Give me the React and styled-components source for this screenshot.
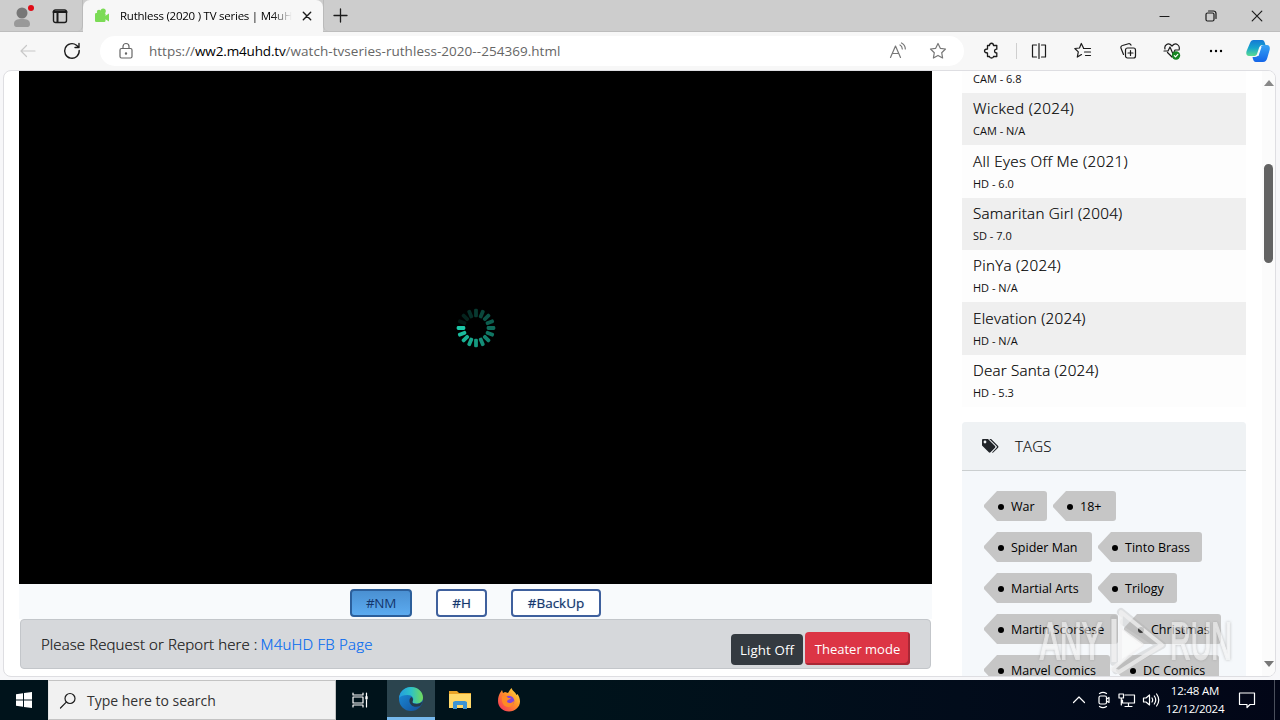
import React from 'react'
import styled, { createGlobalStyle } from 'styled-components'

const GlobalStyle = createGlobalStyle`
* { box-sizing: border-box; }
body {
    margin: 0;
    overflow: hidden;
    background: #f7f7f7;
    font-family: 'Open Sans', 'Noto Sans', sans-serif;
    color: #111;
}
svg { display: block; flex: none; }
`

const Screen = styled.div`
width: 1280px;
height: 720px;
display: flex;
flex-direction: column;
overflow: hidden;
`

// single line of text, spacing keeps it as wide as the system font
const Label = styled.span`
font-size: ${p => p.$size || 15}px;
font-weight: ${p => p.$weight || 400};
letter-spacing: ${p => p.$track || 0}px;
line-height: ${p => p.$line || 20}px;
color: ${p => p.$color || 'inherit'};
-webkit-text-stroke: ${p => p.$weight ? '0.2px currentColor' : '0'};
white-space: nowrap;
`

/* browser */
const TabStrip = styled.div`
height: 32px;
flex: none;
background: #cdcdcd;
border-bottom: 1px solid #bdbdbd;
display: flex;
`
const TabTools = styled.div`
width: 83px;
display: flex;
align-items: center;
gap: 15px;
padding-left: 11px;
border-right: 1px solid #bababa;
border-radius: 0 0 5px 0;
`
const Tab = styled.div`
width: 240px;
height: 32px;
background: #f7f7f7;
border-radius: 7px 7px 0 0;
display: flex;
align-items: center;
justify-content: space-between;
padding: 0 11px;
`
const TabTitle = styled.div`
width: 174px;
margin: 0 10px 0 10px;
overflow: hidden;
display: flex;
-webkit-mask-image: linear-gradient(90deg, #000 88%, transparent);
mask-image: linear-gradient(90deg, #000 88%, transparent);
`
const NewTab = styled.div`
padding: 8px 9px;
border-left: 1px solid #bababa;
border-radius: 0 0 0 5px;
`
const WindowButtons = styled.div`
margin-left: auto;
display: flex;
align-items: center;
gap: 34px;
padding-right: 17px;
`
const Toolbar = styled.div`
height: 38px;
flex: none;
background: #f7f7f7;
display: flex;
align-items: center;
padding-left: 18px;
`
const AddressBar = styled.div`
width: 864px;
height: 30px;
margin-left: -8px;
background: #fff;
border-radius: 15px;
display: flex;
align-items: center;
padding: 0 16px 0 17px;
`
const Url = styled.div`
flex: 1;
margin-left: 14px;
display: flex;
`
const ToolbarIcons = styled.div`
flex: 1;
display: flex;
align-items: center;
padding-left: 17px;
`
const IconSlot = styled.div`
width: ${p => p.$w}px;
margin-left: ${p => p.$ml || 0}px;
flex: none;
display: flex;
justify-content: center;
`
const Separator = styled.div`
width: 1px;
height: 16px;
background: #cfcfcf;
`

/* page */
const PageFrame = styled.div`
height: 610px;
flex: none;
padding: 0 4px 4px 3px;
background: #f7f7f9;
`
const Page = styled.div`
height: 607px;
background: #fff;
border: 1px solid #dedee2;
border-radius: 8px;
overflow: hidden;
display: flex;
padding-left: 15px;
`
const Main = styled.div`
width: 913px;
display: flex;
flex-direction: column;
`
const Player = styled.div`
height: 513px;
background: #000;
display: flex;
justify-content: center;
align-items: center;
`
const Servers = styled.div`
height: 35px;
background: #f8fafc;
display: flex;
justify-content: center;
gap: 24px;
padding-top: 5px;
`
const ServerButton = styled.div`
width: ${p => p.$w}px;
height: 28px;
border: 2px solid ${p => p.$active ? '#2c5f9b' : '#3f609d'};
border-radius: 4px;
background: ${p => p.$active ? 'linear-gradient(#4a90d2, #5cabf0)' : '#fff'};
color: #14366d;
display: flex;
align-items: center;
justify-content: center;
text-shadow: ${p => p.$active ? 'none' : '0 0 1px #8ea4c8'};
`
const Notice = styled.div`
height: 50px;
margin: 0 1px;
background: #d6d8db;
border: 1px solid #c3c6ca;
border-radius: 4px;
display: flex;
padding: 0 20px;
`
const NoticeText = styled.div`
flex: 1;
display: flex;
gap: 3px;
padding-top: 14px;
`
const ModeButton = styled.div`
width: ${p => p.$red ? 105 : 72}px;
height: ${p => p.$red ? 33 : 31}px;
margin: ${p => p.$red ? '12px 0 0 2px' : '14px 0 0'};
background: ${p => p.$red ? '#dc3545' : '#343a40'};
border-radius: 4px;
box-shadow: ${p => p.$red ? 'inset -2px -2px 0 #a92735' : 'none'};
display: flex;
justify-content: center;
align-items: center;
`

/* sidebar */
const Sidebar = styled.div`
width: 284px;
margin-left: 30px;
display: flex;
flex-direction: column;
`
const MovieList = styled.div`
height: 335px;
display: flex;
flex-direction: column;
`
const MovieRow = styled.div`
height: ${p => p.$h}px;
flex: none;
background: ${p => p.$dark ? '#efefef' : '#fdfdfd'};
display: flex;
flex-direction: column;
justify-content: flex-end;
padding: 0 0 5px 11px;
`
const TagsPanel = styled.div`
height: 255px;
flex: none;
margin-top: 16px;
background: #f5f8fb;
border-radius: 4px 4px 0 0;
overflow: hidden;
`
const TagsHeader = styled.div`
height: 49px;
background: #eff2f4;
border-bottom: 1px solid #cbcfd0;
display: flex;
align-items: center;
gap: 16px;
padding-left: 19px;
`
const TagRow = styled.div`
display: flex;
gap: 6px;
margin-bottom: 11px;
`
const TagRows = styled.div`
padding: 20px 0 0 22px;
`
const Tag = styled.div`
width: ${p => p.$w}px;
height: 30px;
background: #c6c6c6;
border-radius: 0 3px 3px 0;
clip-path: polygon(-1px 50%, 13px 0, 100% 0, 100% 100%, 13px 100%);
display: flex;
align-items: center;
gap: 7px;
padding: 1px 0 0 14px;
color: #000;
`
const Dot = styled.i`
width: 6px;
height: 6px;
flex: none;
border-radius: 50%;
background: #000;
`
const Scrollbar = styled.div`
width: 13px;
margin-left: auto;
background: #fbfbfb;
display: flex;
flex-direction: column;
align-items: center;
padding: 9px 0 9px;
`
const Thumb = styled.div`
width: 9px;
height: 99px;
margin: 78px 0 auto;
border-radius: 5px;
background: #636363;
`
const Watermark = styled.div`
position: absolute;
left: 1036px;
top: 606px;
`

/* taskbar */
const Taskbar = styled.div`
height: 40px;
flex: none;
background: linear-gradient(90deg, #00131b 0%, #00131b 45%, #020c1b 75%, #020617 100%);
display: flex;
`
const TaskSlot = styled.div`
width: ${p => p.$w || 49}px;
height: 40px;
display: flex;
align-items: center;
justify-content: center;
background: ${p => p.$active ? '#2b444e' : 'transparent'};
border-bottom: ${p => p.$active ? '3px solid #76b9ed' : '0'};
`
const SearchBox = styled.div`
width: 288px;
background: #f1f1f1;
border: 1px solid #c3c3c3;
border-left-color: #e3e3e3;
display: flex;
align-items: center;
gap: 10px;
padding: 2px 0 0 10px;
`
const Tray = styled.div`
margin-left: auto;
display: flex;
align-items: center;
padding-right: 18px;
border-right: 1px solid #4a4f5c;
margin-right: 5px;
`
const Clock = styled.div`
width: 64px;
display: flex;
flex-direction: column;
align-items: center;
margin-right: 11px;
color: #fff;
`

const Line = ({ w = 18, h = 18, color = '#1b1b1b', sw = 1.2, children }) => (
    <svg width={w} height={h} viewBox={`0 0 ${w} ${h}`} fill="none" stroke={color} strokeWidth={sw} strokeLinejoin="round" strokeLinecap="round">
        {children}
    </svg>
)

const star = 'M9 1.5l2.3 4.8 5.2.7-3.8 3.7.9 5.3L9 13.4 4.4 16l.9-5.3L1.5 7l5.2-.7z'

const movies = [
    { title: '', info: 'CAM - 6.8', h: 22 },
    { title: 'Wicked (2024)', info: 'CAM - N/A', h: 52, track: 0.4 },
    { title: 'All Eyes Off Me (2021)', info: 'HD - 6.0', h: 53, track: 0.33 },
    { title: 'Samaritan Girl (2004)', info: 'SD - 7.0', h: 52, track: 0.27 },
    { title: 'PinYa (2024)', info: 'HD - N/A', h: 52, track: 0.3 },
    { title: 'Elevation (2024)', info: 'HD - N/A', h: 53, track: 0.27 },
    { title: 'Dear Santa (2024)', info: 'HD - 5.3', h: 52, track: 0.2 },
]

const tags = [
    [['War', 63], ['18+', 63]],
    [['Spider Man', 108], ['Tinto Brass', 104]],
    [['Martial Arts', 108], ['Trilogy', 79]],
    [['Martin Scorsese', 134], ['Christmas', 97]],
    [['Marvel Comics', 126], ['DC Comics', 103]],
]

function Spinner() {
    const bars = Array.from({ length: 16 }, (_, i) => i)
    return (
        <svg width="40" height="40" viewBox="-20 -20 40 40">
            {bars.map(i => (
                <rect key={i} x="-1.9" y="-19.3" width="3.8" height="8.6" rx="1.4" fill="#1cc8a8"
                    opacity={Math.max(0.12, 1 - ((12 - i + 16) % 16) * 0.059)}
                    transform={`rotate(${i * 22.5})`} />
            ))}
        </svg>
    )
}

function Copilot() {
    return (
        <svg width="24" height="24" viewBox="0 0 24 24">
            <defs>
                <linearGradient id="copL" x1="0" y1="0" x2="0" y2="1">
                    <stop stopColor="#1479d5" />
                    <stop offset=".5" stopColor="#16a5cc" />
                    <stop offset="1" stopColor="#5bdc91" />
                </linearGradient>
                <linearGradient id="copR" x1="0" y1="0" x2="0" y2="1">
                    <stop stopColor="#36a3f4" />
                    <stop offset="1" stopColor="#1465e8" />
                </linearGradient>
            </defs>
            <path d="M7.500 1H16c2 0 2.500 1.500 3.500 5h-3c-2 0-3 1.500-3.500 3l-2 6c-.6 1.500-1.500 2-3 2H3c-3 0-3.300-3-2-6l3-7c.7-2 1.800-3 3.500-3z" fill="url(#copL)" />
            <path d="M18 6h3c3 0 3.300 3 2.300 6l-2 7c-.8 2.500-2 4-4.300 4h-7c-2 0-3-2-3.500-5H9c2 0 3-1 3.500-3l2-6C15.200 7 16 6 18 6z" fill="url(#copR)" />
            <path d="M14 8h1.500l-3 9H9.500c1.500-.5 2-1 2.500-2.500z" fill="#f4fbff" />
        </svg>
    )
}

function Browser() {
    return (
        <>
            <TabStrip>
                <TabTools>
                    <svg width="26" height="26" viewBox="0 0 26 26">
                        <circle cx="11" cy="10" r="5.5" fill="#777" />
                        <path d="M3 21c0-4 3-5 8-5s8 1 8 5-3 3-8 3-8 1-8-3z" fill="#999" />
                        <circle cx="20" cy="5" r="3" fill="#e00b16" />
                    </svg>
                    <Line w={16} h={16} sw={1.4}>
                        <rect x="1.5" y="2" width="13" height="12.5" rx="2" />
                        <path d="M1.500 4h13M5.500 4v10" strokeWidth="2" />
                    </Line>
                </TabTools>
                <Tab>
                    <svg width="16" height="16" viewBox="0 0 16 16" fill="#7bdb55">
                        <circle cx="5" cy="4" r="2.2" />
                        <circle cx="9.2" cy="3" r="2.6" />
                        <rect x="1" y="5" width="10.5" height="9" rx="1.2" />
                        <path d="M11 8l4-2.500v8L11 11z" />
                    </svg>
                    <TabTitle>
                        <Label $size={11.5} $track={-0.24} $color="#000">Ruthless (2020 ) TV series | M4uHD</Label>
                    </TabTitle>
                    <Line w={10} h={10} sw={1.4}><path d="M1.300 1.300l7.400 7.400M8.700 1.300L1.300 8.700" /></Line>
                </Tab>
                <NewTab><Line w={15} h={15} sw={1.3}><path d="M7.500 1v13M1 7.500h13" /></Line></NewTab>
                <WindowButtons>
                    <Line w={12} h={12}><path d="M1 6.500h9" /></Line>
                    <Line w={12} h={12}>
                        <rect x="1" y="3" width="8" height="8" rx="1.5" />
                        <path d="M3.500 1h5A2.500 2.500 0 0 1 11 3.500v5" />
                    </Line>
                    <Line w={12} h={12}><path d="M1.200 1.200l9.600 9.600M10.800 1.200L1.200 10.800" /></Line>
                </WindowButtons>
            </TabStrip>
            <Toolbar>
                <Line color="#c8c8c8"><path d="M17 9H3M8.500 3.500L3 9l5.500 5.500" /></Line>
                <IconSlot $w={72}>
                    <Line sw={1.4}><path d="M16.200 8.500A7.300 7.300 0 1 1 13.500 3.300L16 5.500M16 1.500v4h-4" /></Line>
                </IconSlot>
                <AddressBar>
                    <Line color="#666">
                        <rect x="3" y="6.5" width="12" height="9.5" rx="1.5" />
                        <path d="M6 6.300V4.500a3 3 0 0 1 6 0v1.800" />
                        <circle cx="9" cy="11.5" r=".6" fill="#666" />
                    </Line>
                    <Url>
                        <Label $size={13.5} $color="#666">https://</Label>
                        <Label $size={13.5} $color="#000" $track={-0.15}>ww2.m4uhd.tv</Label>
                        <Label $size={13.5} $color="#666" $track={0.04}>/watch-tvseries-ruthless-2020--254369.html</Label>
                    </Url>
                    <IconSlot $w={20}>
                        <Line color="#777"><path d="M1.500 15.500L6.500 4l5 11.500M3.200 11.500h6.600M11 3c1.500.8 2.200 2 2.300 4M12.500 1c2.500 1.200 3.800 3.300 3.800 6" /></Line>
                    </IconSlot>
                    <IconSlot $w={20} $ml={20}>
                        <Line color="#777"><path d={star} /></Line>
                    </IconSlot>
                </AddressBar>
                <ToolbarIcons>
                    <IconSlot $w={20}>
                        <Line w={16} h={18} sw={1.3}><path d="M4.500 3.500h2c0-3 4-3 4 0h3.300v3.700c-3 0-3 3.800 0 3.800v3.500h-3.300c0 2-4 2-4 0h-2V11c-4 0-4-4 0-4z" /></Line>
                    </IconSlot>
                    <IconSlot $w={30}><Separator /></IconSlot>
                    <IconSlot $w={16}>
                        <Line w={16}><path d="M5.500 3H1.500v12h4M10.500 3h4v12h-4M8 1.500v15" /></Line>
                    </IconSlot>
                    <IconSlot $w={72}>
                        <Line><path d="M9.500 6L7.300 1.500 5.500 6l-4.700.5 3.500 3.400-1 5.200L7.500 12.600M9.500 6.500h7M10.500 10h6M11.500 13.500h5" /></Line>
                    </IconSlot>
                    <IconSlot $w={18}>
                        <Line>
                            <rect x="6.5" y="6" width="10" height="10" rx="2" />
                            <path d="M11.500 8.500v5M9 11h5M4.500 12.500L2 6.200a2 2 0 0 1 1.500-2.700l6-1.800a2 2 0 0 1 2.500 1.500" />
                        </Line>
                    </IconSlot>
                    <IconSlot $w={70}>
                        <Line>
                            <path d="M9 15L4.500 10.500M2 7C1 3.500 5-.5 9 4c4-4.500 8.500-.5 7 4M1 9h4l2-4 3 7 2-4h3" />
                            <circle cx="13" cy="13.5" r="4.2" fill="#168522" stroke="none" />
                            <path d="M11.300 13.700l1.200 1.200 2.300-2.500" stroke="#fff" />
                        </Line>
                    </IconSlot>
                    <IconSlot $w={18}>
                        <svg width="16" height="4"><circle cx="3" cy="2" r="1.2" /><circle cx="8" cy="2" r="1.2" /><circle cx="13" cy="2" r="1.2" /></svg>
                    </IconSlot>
                    <IconSlot $w={24} $ml={21}><Copilot /></IconSlot>
                </ToolbarIcons>
            </Toolbar>
        </>
    )
}

function Content() {
    return (
        <PageFrame>
            <Page>
                <Main>
                    <Player><Spinner /></Player>
                    <Servers>
                        <ServerButton $w={62} $active><Label $size={13.5} $track={-0.3}>#NM</Label></ServerButton>
                        <ServerButton $w={51}><Label $size={13.5} $track={-0.2}>#H</Label></ServerButton>
                        <ServerButton $w={90}><Label $size={13.5}>#BackUp</Label></ServerButton>
                    </Servers>
                    <Notice>
                        <NoticeText>
                            <Label $size={15} $weight={300} $track={0.1}>Please Request or Report here :</Label>
                            <Label $size={15} $weight={300} $track={0.23} $color="#0068f0">M4uHD FB Page</Label>
                        </NoticeText>
                        <ModeButton><Label $size={13.3} $color="#fff" $track={0.1}>Light Off</Label></ModeButton>
                        <ModeButton $red><Label $size={13} $color="#fff">Theater mode</Label></ModeButton>
                    </Notice>
                </Main>
                <Sidebar>
                    <MovieList>
                        {movies.map((m, i) => (
                            <MovieRow key={i} $h={m.h} $dark={i % 2 === 1}>
                                {m.title && <Label $size={15.2} $line={28} $weight={300} $color="#000" $track={m.track}>{m.title}</Label>}
                                <Label $size={11} $line={18}>{m.info}</Label>
                            </MovieRow>
                        ))}
                    </MovieList>
                    <TagsPanel>
                        <TagsHeader>
                            <svg width="18" height="16" viewBox="0 0 18 16" fill="#212529">
                                <path d="M1 2.200C1 1.400 1.500 1 2.200 1H7l7 7c.5.600.5 1.100 0 1.700l-4.500 4.600c-.6.500-1.100.5-1.700 0L1 7.500zM4 2.600a1.400 1.400 0 1 0 0 2.800 1.400 1.400 0 0 0 0-2.800z" fillRule="evenodd" />
                                <path d="M8.300 1h1.800l7 7c.5.600.5 1.100 0 1.700L12.500 14.300c-.5.500-1 .5-1.500.1l4.700-4.800c.4-.5.4-.9 0-1.300z" />
                            </svg>
                            <Label $size={15} $weight={300} $track={0.2} $line={22}>TAGS</Label>
                        </TagsHeader>
                        <TagRows>
                            {tags.map((row, i) => (
                                <TagRow key={i}>
                                    {row.map(([name, w]) => (
                                        <Tag key={name} $w={w}><Dot /><Label $size={12.5} $line={22}>{name}</Label></Tag>
                                    ))}
                                </TagRow>
                            ))}
                        </TagRows>
                    </TagsPanel>
                </Sidebar>
                <Scrollbar>
                    <svg width="10" height="6"><path d="M0 6L5 0l5 6z" fill="#888" /></svg>
                    <Thumb />
                    <svg width="10" height="6"><path d="M0 0l5 6 5-6z" fill="#777" /></svg>
                </Scrollbar>
            </Page>
        </PageFrame>
    )
}

function AnyRun() {
    return (
        <Watermark>
            <svg width="204" height="70" viewBox="0 0 204 70" fontFamily="'Liberation Sans', sans-serif" fontSize="51">
                <g fill="#f4f4f4" stroke="#f0f0f0" strokeWidth="1.8" opacity=".62" style={{ filter: 'drop-shadow(0 0 1.5px #999)' }}>
                    <text x="4" y="53" textLength="62" lengthAdjust="spacingAndGlyphs">ANY</text>
                    <text x="134" y="53" textLength="62" lengthAdjust="spacingAndGlyphs">RUN</text>
                </g>
                <path d="M78 13v43M85 6l41 33-46 25M88 16l34 22" fill="none" stroke="#aaa" strokeWidth="8" strokeLinejoin="round" strokeLinecap="round" opacity=".3" />
                <path d="M78 13v43" stroke="#f5f5f5" strokeWidth="5" opacity=".7" />
                <path d="M85 6l-1 48 1-30 21 15-30 24 7 3 43-27z" fill="none" stroke="#f2f2f2" strokeWidth="4" strokeLinejoin="round" opacity=".75" />
                <path d="M86 24l21 15-21 14z" fill="#fafafa" opacity=".9" />
            </svg>
        </Watermark>
    )
}

function WinTaskbar() {
    return (
        <Taskbar>
            <TaskSlot $w={48}>
                <svg width="16" height="16" viewBox="0 0 16 16" fill="#fff"><path d="M0 2.300L7 1.300v6.200H0zM8 1.100L16 0v7.500H8zM0 8.500h7v6.200l-7-1zM8 8.500h8V16l-8-1.100z" /></svg>
            </TaskSlot>
            <SearchBox>
                <Line><circle cx="11" cy="6.5" r="5" /><path d="M7.300 10.200L1.500 16" /></Line>
                <Label $size={14} $color="#333">Type here to search</Label>
            </SearchBox>
            <TaskSlot $w={51}>
                <Line w={20} h={16} color="#fff"><path d="M1 1v2h10V1M1 15v-2h10v2M1 5h10v6H1zM14.500 1v3M14.500 8v7" /><path d="M14.500 5v1.500" strokeWidth="2.4" /></Line>
            </TaskSlot>
            <TaskSlot $active $w={48}>
                <svg width="26" height="26" viewBox="0 0 26 26">
                    <defs>
                        <linearGradient id="edgeTop"><stop stopColor="#239ce0" /><stop offset=".5" stopColor="#2dc2c7" /><stop offset="1" stopColor="#72db59" /></linearGradient>
                        <linearGradient id="edgeBot" x1="0" y1="0" x2="1" y2="1"><stop stopColor="#1a91dd" /><stop offset="1" stopColor="#144d98" /></linearGradient>
                    </defs>
                    <circle cx="13" cy="13" r="12" fill="url(#edgeBot)" />
                    <path d="M1 12C2 5 7 1 13 1c7 0 12 5 12 10.500 0 4-3 6-6.500 6-3 0-4.500-1-4-2 2-3 0-6.500-5-6.500-4 0-7 1-8.500 3z" fill="url(#edgeTop)" />
                    <path d="M14.500 15.500c-.5 1.500 1 2.500 4 2.500 2.500 0 4.500-1 6-2.500-.5 2-1.500 3.500-2.500 4.500-6 2.500-11-1-10.500-6 .2-1.500 1-2.500 2-3 1.500 1.300 2 3 1 4.500z" fill="#24394a" />
                </svg>
            </TaskSlot>
            <TaskSlot>
                <svg width="22" height="20" viewBox="0 0 22 20">
                    <path d="M0 1h8l2 2h12v4H0z" fill="#e9a327" />
                    <rect y="4" width="22" height="14" fill="#ffd869" />
                    <path d="M4 19v-7l2-1h10l2 1v7h-4v-4H8v4z" fill="#3b94d5" />
                </svg>
            </TaskSlot>
            <TaskSlot>
                <svg width="24" height="24" viewBox="0 0 24 24">
                    <defs><linearGradient id="fox" x1="1" y1="0" x2="0" y2="1"><stop stopColor="#ffe645" /><stop offset=".45" stopColor="#ff9228" /><stop offset="1" stopColor="#f52763" /></linearGradient></defs>
                    <path d="M1 13C1 9 2 7 3 5l2-3 1 3 2-1 3 1c1-2 2-3 3.500-5 .8 3 4 4 5 7l1-1c1.500 2 2.500 5 2.500 7.500C23 19 18 23.500 12 23.500S1 19 1 13z" fill="url(#fox)" />
                    <circle cx="12" cy="13" r="5.3" fill="#8245d8" />
                    <path d="M5 8c3-1 5 0 6 2h3c-1 2-4 1.500-4 4 2 2 5 1 7-1 0 4-3 6-6 6-4 0-7-4-6-11z" fill="#ff8a25" />
                </svg>
            </TaskSlot>
            <Tray>
                <IconSlot $w={24}>
                    <Line w={14} h={16} color="#fff"><path d="M1.500 10.500L7 5l5.500 5.500" /></Line>
                </IconSlot>
                <IconSlot $w={24}>
                    <Line w={14} h={18} color="#fff"><rect x="3" y="5" width="7.5" height="8" rx="1.5" /><path d="M10.500 8L13 6.500v5L10.500 10M3.500 2.500c2-1.300 5-1.300 7 0M3.500 15.500c2 1.300 5 1.300 7 0" /></Line>
                </IconSlot>
                <IconSlot $w={24}>
                    <Line w={18} h={16} color="#fff"><path d="M7 3h9.500v8H4.500V8M10.500 11v3.500M7 14.500h7M1 2h4.500v4H1zM3.300 6v7" /></Line>
                </IconSlot>
                <IconSlot $w={24}>
                    <Line w={18} h={16} color="#fff"><path d="M1.500 6h2.500l3.500-3v10L4 10H1.500zM10 6c.8 1.200.8 2.800 0 4M12.300 4c1.800 2.500 1.800 5.500 0 8M14.600 2c2.600 3.600 2.600 8.400 0 12" /></Line>
                </IconSlot>
                <Clock>
                    <Label $size={11.5} $line={18} $track={-0.2}>12:48 AM</Label>
                    <Label $size={11.5} $line={18} $track={-0.25}>12/12/2024</Label>
                </Clock>
                <Line w={18} h={18} color="#fff"><path d="M1.500 2h15v11.500H12L9 16.500v-3H1.500z" /></Line>
            </Tray>
        </Taskbar>
    )
}

export default function App() {
    return (
        <Screen>
            <GlobalStyle />
            <Browser />
            <Content />
            <WinTaskbar />
            <AnyRun />
        </Screen>
    )
}
